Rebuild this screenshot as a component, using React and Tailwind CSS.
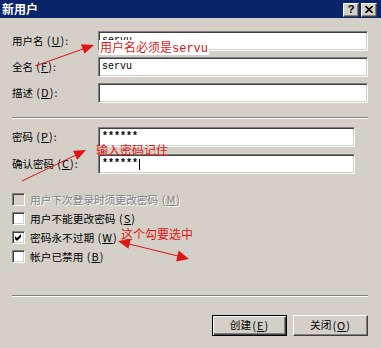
import React from "react";

const CJK = "font-['Noto_Sans_CJK_SC','Noto_Sans',sans-serif]";
const sunken =
  "border border-t-[#808080] border-l-[#808080] border-b-white border-r-white shadow-[inset_1px_1px_0_#404040,inset_-1px_-1px_0_#d4d0c8]";

function Mn({ c }) {
  return (
    <span className="text-[11px] tracking-[1px] ml-[1px]">
      (<span className="underline">{c}</span>)
    </span>
  );
}

function Row({ label, children, narrow }) {
  return (
    <div className="flex items-center h-[20px]">
      <div className="w-[86px] shrink-0 text-[10.5px] leading-none text-black whitespace-nowrap">{label}</div>
      <div
        className={`h-[20px] flex-1 bg-white ${sunken} flex items-center pl-[3px] ${narrow ? "mr-[13px]" : ""}`}
      >
        {children}
      </div>
    </div>
  );
}

function Check({ checked, disabled }) {
  return (
    <div
      className={`w-[13px] h-[13px] shrink-0 ${disabled ? "bg-[#d4d0c8]" : "bg-white"} ${sunken} flex items-center justify-center`}
    >
      {checked && (
        <svg width="7" height="7" viewBox="0 0 7 7">
          <path d="M0 2 L2 4 L6 0 L6 3 L2 7 L0 5 Z" fill="#000" />
        </svg>
      )}
    </div>
  );
}

function CheckRow({ checked, disabled, children }) {
  return (
    <div className="flex items-center h-[19px] gap-[5px]">
      <Check checked={checked} disabled={disabled} />
      <span
        className={`text-[10.7px] leading-none whitespace-nowrap ${
          disabled ? "text-[#808080] [text-shadow:1px_1px_0_#fff]" : "text-black"
        }`}
      >
        {children}
      </span>
    </div>
  );
}

function Sep() {
  return <div className="h-0 border-t border-b border-t-[#808080] border-b-white" />;
}

export default function App() {
  const red = "#e01414";
  return (
    <div className={`relative w-[381px] h-[348px] overflow-hidden bg-[#d4d0c8] ${CJK}`}>
      {/* title bar */}
      <div className="h-[18px] bg-[#0a246a] flex items-center pl-[2px] pr-[4px]">
        <span className="text-white font-bold text-[12px] leading-none">新用户</span>
        <div className="ml-auto flex gap-[2px] mt-[1px]">
          <div className="w-[16px] h-[14px] bg-[#d4d0c8] border border-t-white border-l-white border-b-[#404040] border-r-[#404040] shadow-[inset_-1px_-1px_0_#808080] flex items-center justify-center">
            <span className="font-['Liberation_Sans',sans-serif] font-bold text-[11px] leading-none text-black">?</span>
          </div>
          <div className="w-[16px] h-[14px] bg-[#d4d0c8] border border-t-white border-l-white border-b-[#404040] border-r-[#404040] shadow-[inset_-1px_-1px_0_#808080] flex items-center justify-center">
            <svg width="8" height="7" viewBox="0 0 8 7">
              <path d="M0.5 0 L7.5 7 M7.5 0 L0.5 7" stroke="#000" strokeWidth="1.6" />
            </svg>
          </div>
        </div>
      </div>

      {/* body */}
      <div className="pl-[12px] pr-[13px]">
        <div className="flex flex-col gap-[6px] pt-[13px]">
          <Row label={<>用户名 <Mn c="U" />:</>}>
            <span className="font-['Liberation_Mono',monospace] text-[10px] leading-none">servu</span>
          </Row>
          <Row label={<>全名 <Mn c="F" />:</>}>
            <span className="font-['Liberation_Mono',monospace] text-[10px] leading-none">servu</span>
          </Row>
          <Row label={<>描述 <Mn c="D" />:</>} />
        </div>

        <div className="mt-[14px]">
          <Sep />
        </div>

        <div className="flex flex-col gap-[7px] mt-[8px]">
          <Row narrow label={<>密码 <Mn c="P" />:</>}>
            <span className="font-['Liberation_Mono',monospace] font-bold text-[10px] leading-none">******</span>
          </Row>
          <Row narrow label={<>确认密码 <Mn c="C" />:</>}>
            <span className="font-['Liberation_Mono',monospace] font-bold text-[10px] leading-none">******</span>
            <span className="w-px h-[11px] bg-black ml-[1px]" />
          </Row>
        </div>

        <div className="flex flex-col mt-[16px]">
          <CheckRow disabled>
            用户下次登录时须更改密码 <Mn c="M" />
          </CheckRow>
          <CheckRow>
            用户不能更改密码 <Mn c="S" />
          </CheckRow>
          <CheckRow checked>
            密码永不过期 <Mn c="W" />
          </CheckRow>
          <CheckRow>
            帐户已禁用 <Mn c="B" />
          </CheckRow>
        </div>

        <div className="mt-[29px]">
          <Sep />
        </div>

        <div className="flex justify-end gap-[6px] mt-[18px]">
          <button className="w-[75px] h-[21px] bg-[#d4d0c8] border border-black shadow-[inset_1px_1px_0_#fff,inset_-1px_-1px_0_#404040,inset_-2px_-2px_0_#808080] text-[10.7px] leading-none text-black flex items-center justify-center">
            创建 <Mn c="E" />
          </button>
          <button className="w-[75px] h-[21px] bg-[#d4d0c8] border border-t-white border-l-white border-b-[#404040] border-r-[#404040] shadow-[inset_-1px_-1px_0_#808080] text-[10.7px] leading-none text-black flex items-center justify-center">
            关闭 <Mn c="O" />
          </button>
        </div>
      </div>

      {/* annotations */}
      <div className="absolute left-[99px] top-[40px] h-[15px] w-[110px] bg-white flex items-center pl-[1px]">
        <span className="text-[12px] leading-none text-[#e01414] whitespace-nowrap">
          用户名必须是<span className="font-['Liberation_Mono',monospace]">servu</span>
        </span>
      </div>
      <div className="absolute left-[96px] top-[144px] text-[12px] leading-none text-[#e01414] whitespace-nowrap">
        输入密码记住
      </div>
      <div className="absolute left-[121px] top-[228px] text-[12px] leading-none text-[#e01414] whitespace-nowrap">
        这个勾要选中
      </div>
      <svg className="absolute inset-0 pointer-events-none" width="381" height="348">
        <line x1="35" y1="66" x2="83" y2="49" stroke={red} strokeWidth="1" />
        <polygon points="94,45 84.4,53.7 81,44.3" fill={red} />
        <line x1="22" y1="181" x2="76" y2="155" stroke={red} strokeWidth="1" />
        <polygon points="86,150 77.4,159.7 73,150.7" fill={red} />
        <line x1="129" y1="244" x2="178" y2="256" stroke={red} strokeWidth="1" />
        <polygon points="118,241 128.4,248.8 130.8,239.1" fill={red} />
        <polygon points="189,259 176.2,261.5 178.6,250.6" fill={red} />
      </svg>
    </div>
  );
}
